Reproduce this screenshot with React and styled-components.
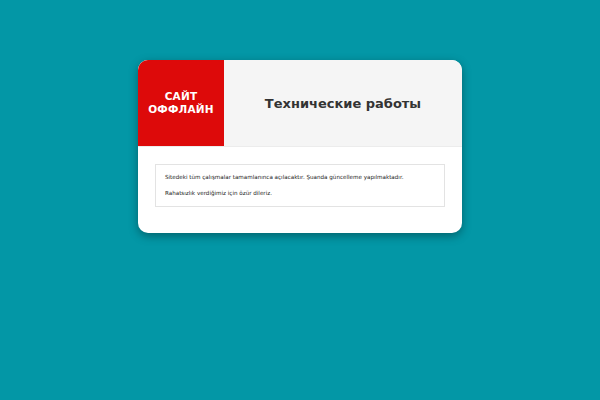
import React from "react";
import styled, { createGlobalStyle } from "styled-components";

const Global = createGlobalStyle`
  html, body { margin: 0; padding: 0; }
  body { background: #0397a6; font-family: "DejaVu Sans", sans-serif; width: 600px; height: 400px; overflow: hidden; }
`;

const Page = styled.div`
  width: 600px;
  height: 400px;
  padding-top: 60px;
  box-sizing: border-box;
  display: flex;
  justify-content: center;
  align-items: flex-start;
`;

const Card = styled.div`
  width: 324px;
  background: #ffffff;
  border-radius: 10px;
  overflow: hidden;
  box-shadow: 0 3px 10px rgba(0, 0, 0, 0.35);
`;

const Header = styled.div`
  display: flex;
  height: 86px;
  background: #f5f5f5;
  border-bottom: 1px solid #ececec;
`;

const Badge = styled.div`
  width: 86px;
  flex: none;
  background: #dd0a0a;
  color: #fff;
  display: flex;
  flex-direction: column;
  align-items: center;
  justify-content: center;
  font-weight: bold;
  font-size: 10.5px;
  line-height: 13px;
  letter-spacing: 0.2px;
  text-align: center;
`;

const Title = styled.h1`
  flex: 1;
  margin: 0;
  display: flex;
  align-items: center;
  justify-content: center;
  font-size: 13px;
  font-weight: bold;
  color: #333;
`;

const Body = styled.div`
  padding: 17px 17px 26px 17px;
`;

const Notice = styled.div`
  border: 1px solid #e3e3e3;
  padding: 8px 9px 9px 9px;
  font-size: 5.6px;
  color: #222;
`;

const Line = styled.p`
  margin: 0;
  line-height: 8px;
  & + & { margin-top: 8px; }
`;

export default function App() {
  return (
    <>
      <Global />
      <Page>
        <Card>
          <Header>
            <Badge>
              <span>САЙТ</span>
              <span>ОФФЛАЙН</span>
            </Badge>
            <Title>Технические работы</Title>
          </Header>
          <Body>
            <Notice>
              <Line>Sitedeki tüm çalışmalar tamamlanınca açılacaktır. Şuanda güncelleme yapılmaktadır.</Line>
              <Line>Rahatsızlık verdiğimiz için özür dileriz.</Line>
            </Notice>
          </Body>
        </Card>
      </Page>
    </>
  );
}
